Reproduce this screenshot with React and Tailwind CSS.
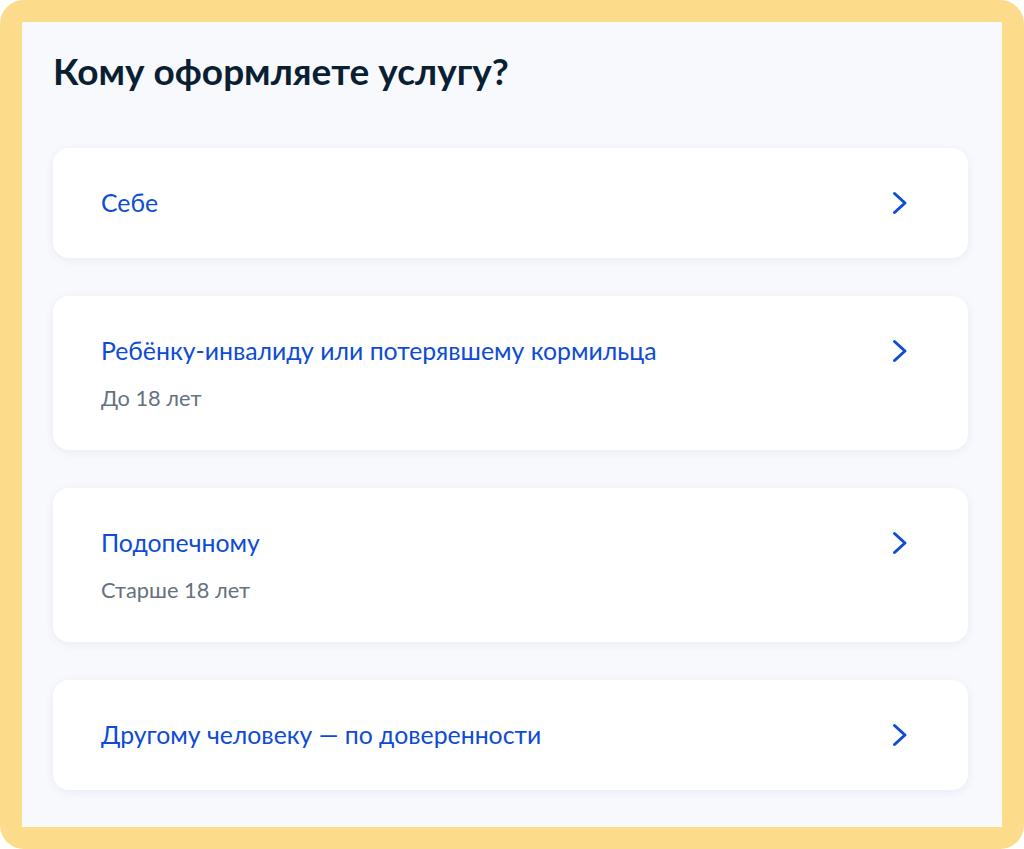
const OPTIONS = [
  { title: 'Себе' },
  { title: 'Ребёнку-инвалиду или потерявшему кормильца', sub: 'До 18 лет' },
  { title: 'Подопечному', sub: 'Старше 18 лет' },
  { title: 'Другому человеку — по доверенности' },
];

function Chevron() {
  return (
    <svg width="16" height="24" viewBox="0 0 16 24" fill="none" className="shrink-0">
      <polyline points="2.5,2.5 13,12 2.5,21.5" stroke="#0d4cd3" strokeWidth="3" strokeLinecap="round" strokeLinejoin="round" />
    </svg>
  );
}

function OptionCard({ title, sub }) {
  return (
    <div className="bg-white rounded-[16px] shadow-[0_2px_10px_rgba(0,60,140,0.07)] pl-[48px] pr-[60px] py-[40px] flex items-start justify-between cursor-pointer">
      <div>
        <p className="text-[24.8px] leading-[30px] text-[#0d4cd3]">{title}</p>
        {sub && <p className="text-[21.8px] leading-[24px] text-[#66727f] mt-[20px]">{sub}</p>}
      </div>
      <div className="h-[30px] flex items-center">
        <Chevron />
      </div>
    </div>
  );
}

export default function App() {
  return (
    <div className="w-[1024px] h-[849px] bg-white" style={{ fontFamily: 'Lato, "Noto Sans", sans-serif' }}>
      <div className="h-full rounded-[24px] bg-[#fcdc8a] p-[22px]">
        <div className="h-full bg-[#f8f9fd] pt-[27px] pl-[31px] pr-[34px]">
          <h1 className="text-[37px] leading-[44px] font-bold text-[#0b1f33]">Кому оформляете услугу?</h1>
          <div className="mt-[55px] flex flex-col gap-[38px]">
            {OPTIONS.map(o => <OptionCard key={o.title} {...o} />)}
          </div>
        </div>
      </div>
    </div>
  );
}
